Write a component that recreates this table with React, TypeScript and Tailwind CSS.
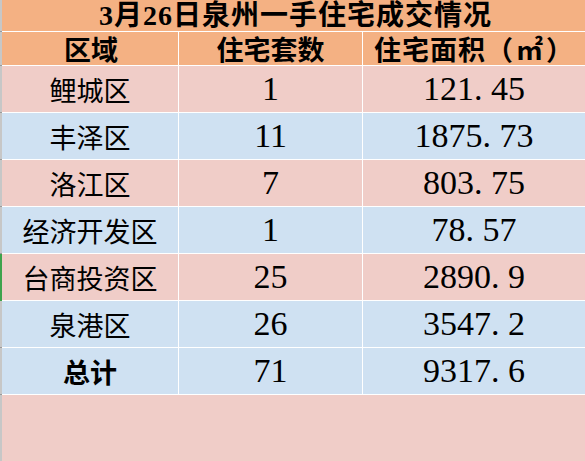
import React from "react";

// Excel-style summary table: 3月26日泉州一手住宅成交情况
const PINK = "bg-[#f0cdc8]";
const BLUE = "bg-[#cfe1f2]";

const rows = [
  { name: "鲤城区", count: "1", area: "121.45", bg: PINK },
  { name: "丰泽区", count: "11", area: "1875.73", bg: BLUE },
  { name: "洛江区", count: "7", area: "803.75", bg: PINK },
  { name: "经济开发区", count: "1", area: "78.57", bg: BLUE },
  { name: "台商投资区", count: "25", area: "2890.9", bg: PINK, active: true },
  { name: "泉港区", count: "26", area: "3547.2", bg: BLUE },
  { name: "总计", count: "71", area: "9317.6", bg: BLUE, bold: true },
];

const cjk = "font-['Noto_Sans_CJK_SC',sans-serif]";
const serif = "font-['Liberation_Serif','Noto_Sans_CJK_SC',serif]";

// digits are half-width cells like SimSun: keep the period in a full cell
function Num({ value }: { value: string }) {
  return (
    <span className={`${serif} text-[34px] leading-none text-black`}>
      {value.split("").map((ch, i) =>
        ch === "." ? (
          <span key={i} className="inline-block w-[17px] text-left">
            .
          </span>
        ) : (
          <span key={i}>{ch}</span>
        )
      )}
    </span>
  );
}

function Strip({ active }: { active?: boolean }) {
  return (
    <div
      className={
        active
          ? "w-[2px] shrink-0 bg-[#3fa34d] border-b border-[#3fa34d]"
          : "w-[2px] shrink-0 bg-[#c7c7c7] border-b border-[#9a9a9a]"
      }
    />
  );
}

export default function App() {
  return (
    <div className="w-[585px] h-[461px] overflow-hidden bg-white flex flex-col">
      {/* title */}
      <div className="flex h-[32px]">
        <Strip />
        <div className="flex-1 flex items-center justify-center bg-[#f4b183] border-b border-white">
          <span className={`${serif} text-[28px] font-bold tracking-[1px] leading-none text-black pl-[4px]`}>
            3月26日泉州一手住宅成交情况
          </span>
        </div>
      </div>

      {/* header */}
      <div className="flex h-[34px]">
        <Strip />
        <div className={`flex flex-1 bg-[#f4b183] border-b border-white ${cjk} text-[27px] font-bold leading-none text-black`}>
          <div className="w-[177px] flex items-center justify-center border-r border-white pl-[2px]">区域</div>
          <div className="w-[184px] flex items-center justify-center border-r border-white">住宅套数</div>
          <div className="flex-1 flex items-center justify-center tracking-[1px]">
            住宅面积（<span className="px-[2px]">㎡</span>）
          </div>
        </div>
      </div>

      {/* data */}
      {rows.map((r) => (
        <div key={r.name} className="flex h-[47px]">
          <Strip active={r.active} />
          <div className={`flex flex-1 ${r.bg} border-b border-white`}>
            <div
              className={`w-[177px] flex items-center justify-center border-r border-white ${cjk} text-[27px] leading-none text-black ${
                r.bold ? "font-bold" : "font-normal"
              }`}
            >
              {r.name}
            </div>
            <div className="w-[184px] flex items-center justify-center border-r border-white">
              <Num value={r.count} />
            </div>
            <div className="flex-1 flex items-center justify-center">
              <Num value={r.area} />
            </div>
          </div>
        </div>
      ))}

      {/* empty merged area */}
      <div className="flex flex-1">
        <div className="w-[2px] shrink-0 bg-[#c7c7c7]" />
        <div className={`flex-1 ${PINK}`} />
      </div>
    </div>
  );
}
